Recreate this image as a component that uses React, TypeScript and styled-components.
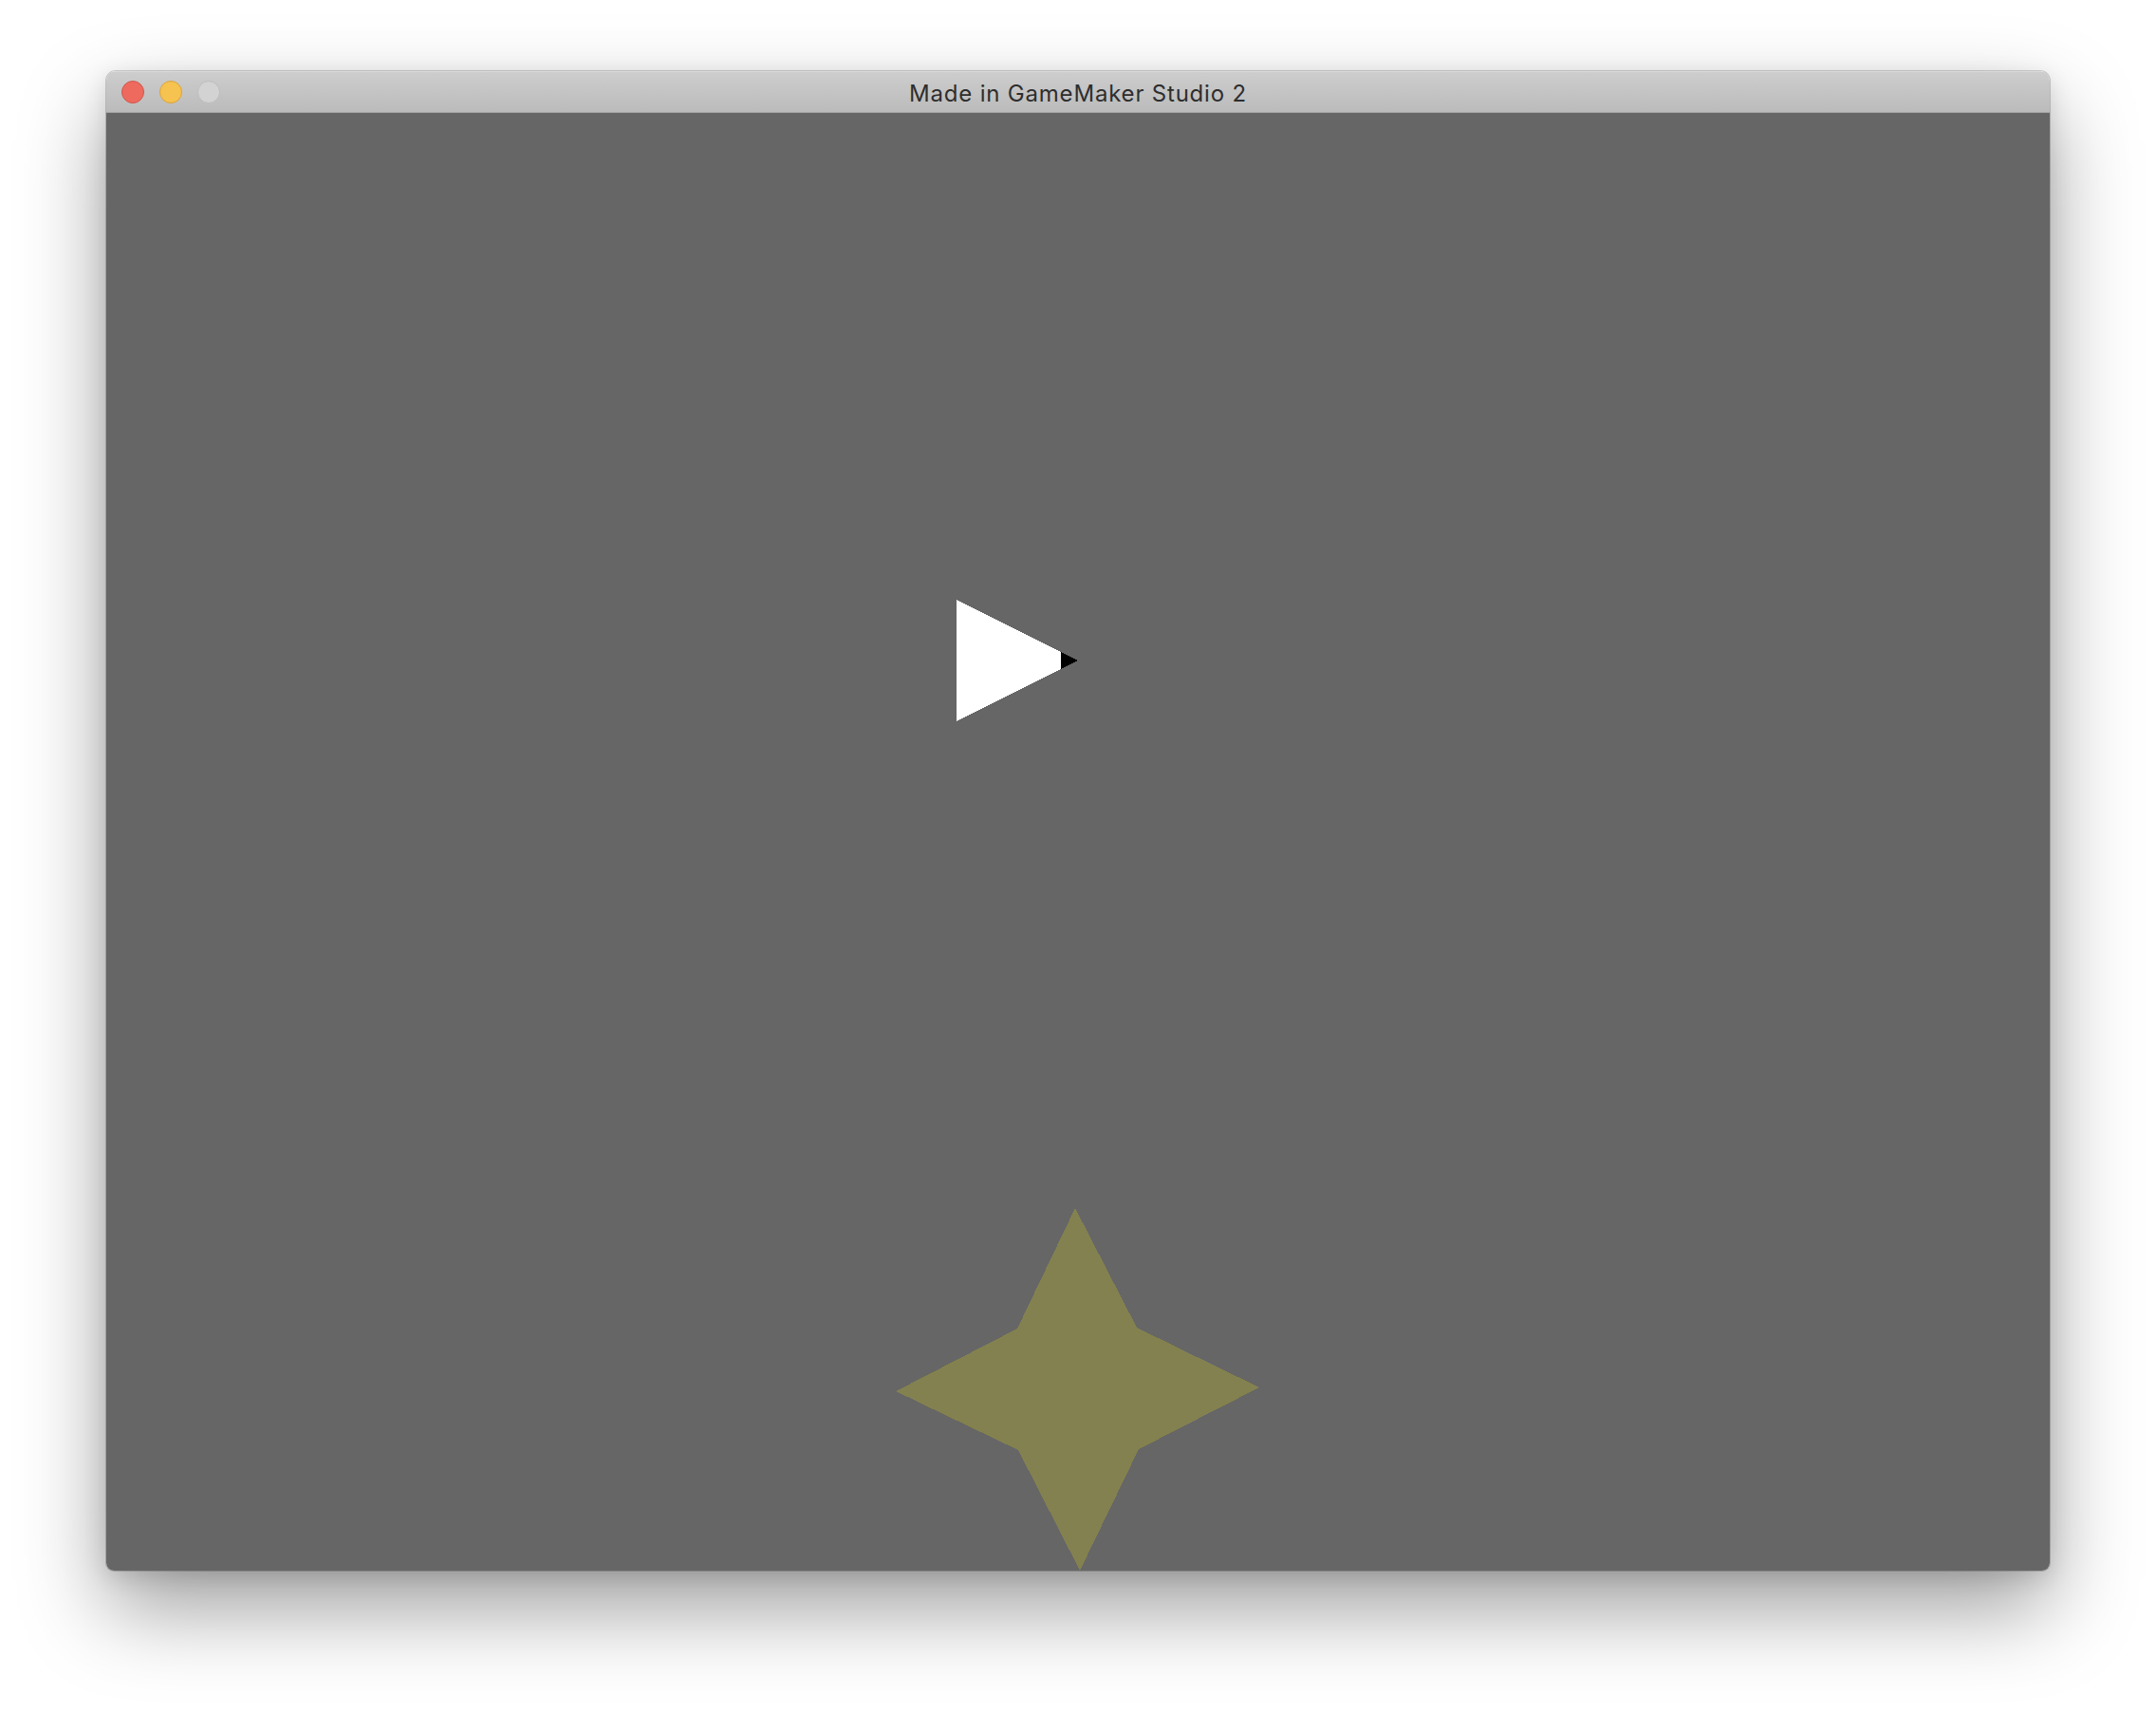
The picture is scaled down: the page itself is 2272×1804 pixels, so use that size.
import React from "react";
import styled, { createGlobalStyle } from "styled-components";

const Global = createGlobalStyle`
  html, body { margin: 0; padding: 0; background: #ffffff; }
  #root { width: 2272px; height: 1804px; }
`;

const Page = styled.div`
  width: 2272px;
  height: 1804px;
  display: flex;
  justify-content: center;
  align-items: flex-start;
  padding-top: 75px;
  box-sizing: border-box;
  background: #ffffff;
  overflow: hidden;
`;

const Window = styled.div`
  width: 2048px;
  display: flex;
  flex-direction: column;
  border-radius: 10px 10px 8px 8px;
  overflow: hidden;
  box-shadow: 0 40px 90px rgba(0, 0, 0, 0.38), 0 6px 24px rgba(0, 0, 0, 0.12),
    0 0 0 1px rgba(0, 0, 0, 0.18);
`;

const TitleBar = styled.div`
  position: relative;
  height: 42px;
  display: flex;
  align-items: center;
  justify-content: center;
  background: linear-gradient(#cdcdcd, #bbbbbb);
  border-top: 1px solid #dcdcdc;
  border-bottom: 1px solid #a4a4a4;
  box-sizing: content-box;
`;

const Lights = styled.div`
  position: absolute;
  left: 16px;
  top: 0;
  bottom: 0;
  display: flex;
  align-items: center;
  gap: 16px;
`;

const Light = styled.span<{ $fill: string; $edge: string }>`
  width: 24px;
  height: 24px;
  border-radius: 50%;
  box-sizing: border-box;
  background: ${(p) => p.$fill};
  border: 1px solid ${(p) => p.$edge};
`;

const Title = styled.div`
  font-family: "Inter", "Liberation Sans", Arial, sans-serif;
  font-size: 24px;
  letter-spacing: 0.8px;
  line-height: 1;
  color: #2e2e2e;
  padding-top: 3px;
`;

const Canvas = styled.svg`
  display: block;
  width: 2048px;
  height: 1536px;
  background: #666666;
`;

export default function App() {
  return (
    <>
      <Global />
      <Page>
        <Window>
          <TitleBar>
            <Lights>
              <Light $fill="#ee6a5f" $edge="#d0564b" />
              <Light $fill="#f6c250" $edge="#d9a43a" />
              <Light $fill="#d3d3d3" $edge="#bdbdbd" />
            </Lights>
            <Title>Made in GameMaker Studio 2</Title>
          </TitleBar>
          <Canvas viewBox="0 0 2048 1536" shapeRendering="crispEdges">
            <polygon points="896,513 896,641 1024,577" fill="#ffffff" />
            <polygon points="1006,568 1006,586 1024,577" fill="#000000" />
            <polygon
              points="1021,1154 1086,1280 1215,1343 1088,1408 1026,1536 961,1409 832,1347 960,1281"
              fill="#83814f"
            />
          </Canvas>
        </Window>
      </Page>
    </>
  );
}
